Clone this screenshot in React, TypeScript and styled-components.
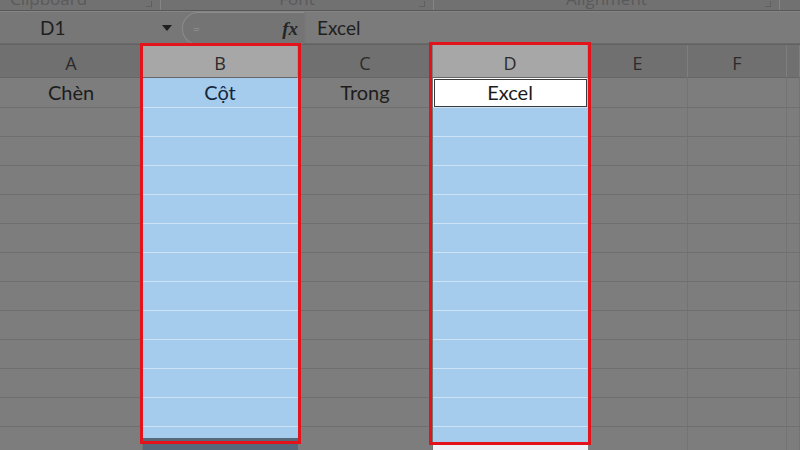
import styled, { createGlobalStyle } from "styled-components";

const Global = createGlobalStyle`
  html, body { margin: 0; padding: 0; background: #7c7c7c; }
  body { width: 800px; height: 450px; overflow: hidden; font-family: "Lato", "Open Sans", sans-serif; }
`;

const COLS = [
  { key: "A", width: 143 },
  { key: "B", width: 155, selected: true },
  { key: "C", width: 135 },
  { key: "D", width: 155, selected: true },
  { key: "E", width: 100 },
  { key: "F", width: 99 },
  { key: "G", width: 13 },
];
const template = COLS.map((c) => `${c.width}px`).join(" ");

const Screen = styled.div`
  width: 800px;
  height: 450px;
  display: flex;
  flex-direction: column;
  background: #7c7c7c;
  overflow: hidden;
`;

const Ribbon = styled.div`
  flex: none;
  height: 10px;
  display: flex;
  background: #717171;
  border-bottom: 1px solid #575757;
  box-shadow: 0 1px 0 #868686;
  overflow: hidden;
`;

const RibbonGroup = styled.div<{ $w: number; $left?: boolean }>`
  position: relative;
  width: ${({ $w }) => $w}px;
  flex: none;
  border-right: 1px solid #858585;
  color: #5a5a5a;
  font-family: "Open Sans", sans-serif;
  font-size: 17px;
  line-height: 1;
  text-align: ${({ $left }) => ($left ? "left" : "center")};
  & > span {
    display: block;
    margin-top: -10px;
    padding-left: ${({ $left }) => ($left ? "10px" : "0")};
  }
`;

const Launcher = styled.i`
  position: absolute;
  right: 8px;
  top: 1px;
  width: 5px;
  height: 5px;
  border-right: 1px solid #5f5f5f;
  border-bottom: 1px solid #5f5f5f;
`;

const FormulaBar = styled.div`
  flex: none;
  height: 31px;
  margin-top: 1px;
  display: flex;
  align-items: stretch;
  background: #777777;
  border-bottom: 1px solid #6a6a6a;
`;

const NameBox = styled.div`
  width: 180px;
  flex: none;
  display: flex;
  align-items: center;
  justify-content: space-between;
  padding: 0 8px 0 40px;
  box-sizing: border-box;
  font-size: 19px;
  color: #1f1f1f;
`;

const Caret = styled.span`
  width: 0;
  height: 0;
  border-left: 5px solid transparent;
  border-right: 5px solid transparent;
  border-top: 6px solid #1f1f1f;
`;

const FxPill = styled.div`
  width: 122px;
  flex: none;
  display: flex;
  align-items: center;
  justify-content: space-between;
  padding: 0 6px 0 10px;
  box-sizing: border-box;
  border: 1px solid #8c8c8c;
  border-right: none;
  border-radius: 16px 0 0 16px;
  margin: 0 0 -2px 2px;
  background: #747474;
  color: #8a8a8a;
  font-size: 12px;
`;

const Fx = styled.span`
  font-family: "Liberation Serif", serif;
  font-style: italic;
  font-weight: bold;
  font-size: 19px;
  color: #262626;
`;

const FormulaInput = styled.div`
  flex: 1;
  display: flex;
  align-items: center;
  padding-left: 11px;
  margin-left: 2px;
  background: #7b7b7b;
  font-size: 19px;
  color: #1f1f1f;
`;

const SheetArea = styled.div`
  position: relative;
  flex: 1;
  min-height: 0;
  border-top: 1px solid #626262;
`;

const Row = styled.div`
  display: grid;
  grid-template-columns: ${template};
`;

const HeaderCell = styled.div<{ $sel?: boolean }>`
  height: 33px;
  display: flex;
  align-items: center;
  justify-content: center;
  background: ${({ $sel }) => ($sel ? "#a7a7a7" : "#707070")};
  border-right: 1px solid ${({ $sel }) => ($sel ? "#9a9a9a" : "#7e7e7e")};
  border-bottom: 1px solid #666666;
  box-sizing: border-box;
  color: #2b2b2b;
  font-family: "Open Sans", sans-serif;
  font-size: 18px;
  padding-top: 3px;
`;

const Cell = styled.div<{ $sel?: boolean; $active?: boolean; $tall?: boolean }>`
  height: ${({ $tall }) => ($tall ? 30 : 29)}px;
  box-sizing: border-box;
  display: flex;
  align-items: center;
  justify-content: center;
  background: ${({ $sel, $active }) => ($active ? "#ffffff" : $sel ? "#a5cced" : "#7d7d7d")};
  border-bottom: 1px solid ${({ $sel }) => ($sel ? "#cfe3f6" : "#6f6f6f")};
  border-right: 1px solid ${({ $sel }) => ($sel ? "#a5cced" : "#737373")};
  ${({ $active }) => ($active ? "outline: 1px solid #3a3a3a; outline-offset: -2px;" : "")}
  color: ${({ $sel, $active }) => ($sel && !$active ? "#15263a" : "#1c1c1c")};
  font-size: 20px;
  padding-bottom: 2px;
`;

const Strip = styled.div<{ $x: number; $y: number; $h: number; $bg: string }>`
  position: absolute;
  left: ${({ $x }) => $x}px;
  top: ${({ $y }) => $y}px;
  width: 155px;
  height: ${({ $h }) => $h}px;
  background: ${({ $bg }) => $bg};
`;

const RedFrame = styled.div<{ $x: number; $y: number; $w: number; $h: number }>`
  position: absolute;
  left: ${({ $x }) => $x}px;
  top: ${({ $y }) => $y}px;
  width: ${({ $w }) => $w}px;
  height: ${({ $h }) => $h}px;
  box-sizing: border-box;
  border: 3px solid #e3131b;
  pointer-events: none;
`;

const data: Record<string, string> = { A: "Chèn", B: "Cột", C: "Trong", D: "Excel" };

export default function App() {
  const rows = Array.from({ length: 13 });
  return (
    <Screen>
      <Global />
      <Ribbon>
        <RibbonGroup $w={160} $left>
          <span>Clipboard</span>
          <Launcher />
        </RibbonGroup>
        <RibbonGroup $w={272}>
          <span>Font</span>
          <Launcher />
        </RibbonGroup>
        <RibbonGroup $w={345}>
          <span>Alignment</span>
          <Launcher />
        </RibbonGroup>
      </Ribbon>
      <FormulaBar>
        <NameBox>
          D1
          <Caret />
        </NameBox>
        <FxPill>
          <span>=</span>
          <Fx>fx</Fx>
        </FxPill>
        <FormulaInput>Excel</FormulaInput>
      </FormulaBar>
      <SheetArea>
        <Row>
          {COLS.map((c) => (
            <HeaderCell key={c.key} $sel={c.selected}>
              {c.key === "G" ? "" : c.key}
            </HeaderCell>
          ))}
        </Row>
        {rows.map((_, r) => (
          <Row key={r}>
            {COLS.map((c) => (
              <Cell
                key={c.key}
                $sel={c.selected}
                $active={r === 0 && c.key === "D"}
                $tall={r === 0}
              >
                {r === 0 ? data[c.key] ?? "" : ""}
              </Cell>
            ))}
          </Row>
        ))}
        <Strip $x={143} $y={393} $h={20} $bg="#56687a" />
        <Strip $x={433} $y={399} $h={10} $bg="#eef2f6" />
        <RedFrame $x={140} $y={-2} $w={161} $h={401} />
        <RedFrame $x={429} $y={-3} $w={162} $h={403} />
      </SheetArea>
    </Screen>
  );
}
